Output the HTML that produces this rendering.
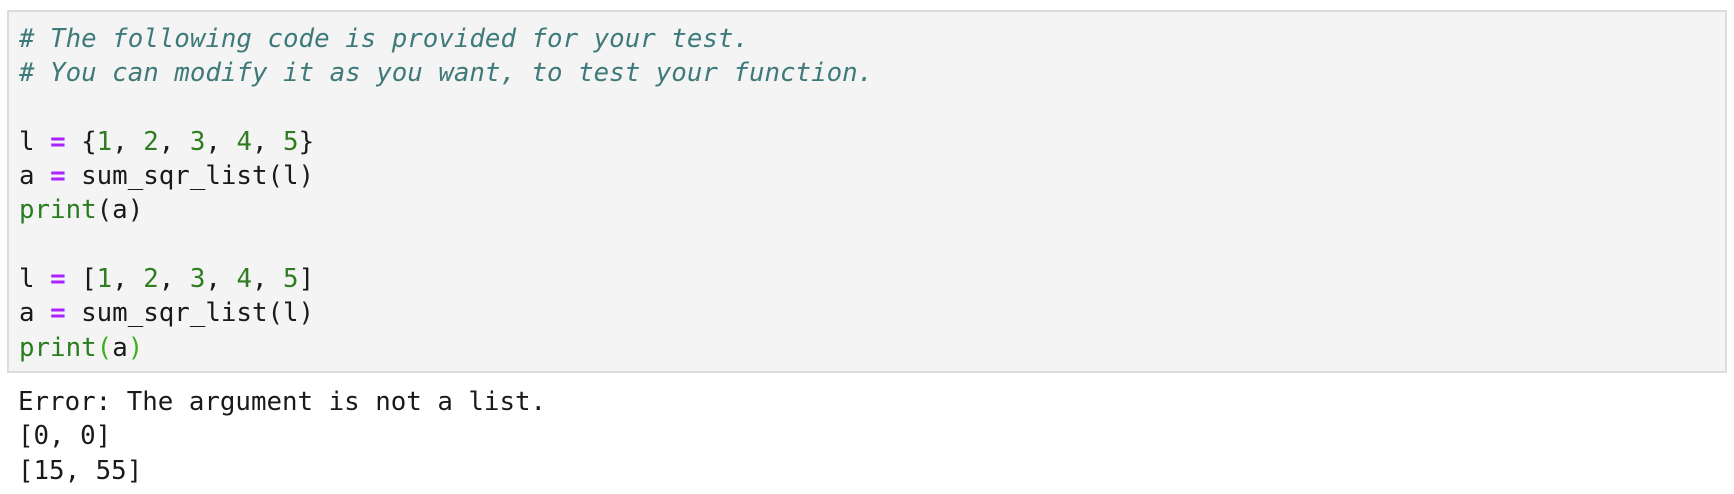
<!DOCTYPE html>
<html><head><style>
body{margin:0;width:1734px;height:494px;background:#fff;font-family:"DejaVu Sans Mono","Liberation Mono",monospace;font-size:25.8px;color:#1a1a1a;}
.box{position:absolute;left:7px;top:10px;width:1716px;height:359px;background:#f4f4f4;border:2px solid #dcdcdc;}
pre{margin:0;font:inherit;line-height:34.3px;white-space:pre;}
.code{position:absolute;left:10px;top:10px;}
.out{position:absolute;left:18px;top:385px;}
.c{color:#3f7a7a;font-style:italic}
.o{color:#aa22ff;font-weight:bold}
.n{color:#2e7d1f}
.k{color:#2a7d1f}
.m{color:#3cb01f}
</style></head><body>
<div class="box"><pre class="code"><span class="c"># The following code is provided for your test.</span>
<span class="c"># You can modify it as you want, to test your function.</span>

l <span class="o">=</span> {<span class="n">1</span>, <span class="n">2</span>, <span class="n">3</span>, <span class="n">4</span>, <span class="n">5</span>}
a <span class="o">=</span> sum_sqr_list(l)
<span class="k">print</span>(a)

l <span class="o">=</span> [<span class="n">1</span>, <span class="n">2</span>, <span class="n">3</span>, <span class="n">4</span>, <span class="n">5</span>]
a <span class="o">=</span> sum_sqr_list(l)
<span class="k">print</span><span class="m">(</span>a<span class="m">)</span></pre></div>
<pre class="out">Error: The argument is not a list.
[0, 0]
[15, 55]</pre>
</body></html>
